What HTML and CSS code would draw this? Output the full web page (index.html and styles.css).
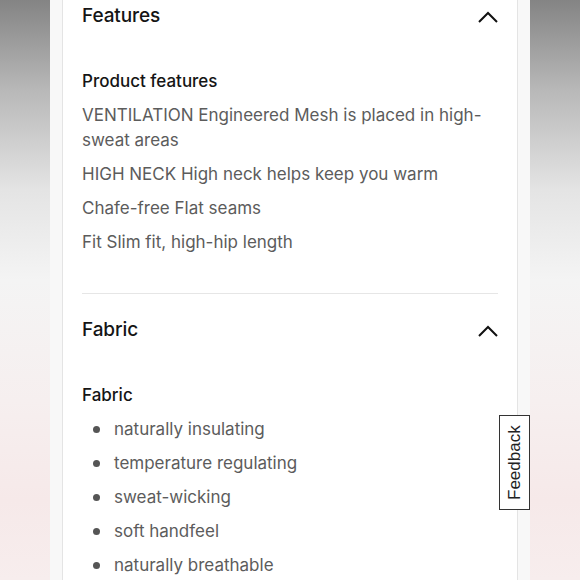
FILE: index.html
```html
<!DOCTYPE html>
<html>
<head>
<meta charset="utf-8">
<link rel="stylesheet" href="styles.css">
</head>
<body>
<div class="frame">
  <div class="card">
    <section class="section">
      <div class="section-head">
        <h2 class="section-title">Features</h2>
        <svg class="chevron" width="20" height="12" viewBox="0 0 20 12"><path d="M1 11 L10 2 L19 11" fill="none" stroke="#111" stroke-width="2"/></svg>
      </div>
      <h3 class="sub-title">Product features</h3>
      <ul class="plain-list">
        <li>VENTILATION Engineered Mesh is placed in high-sweat areas</li>
        <li>HIGH NECK High neck helps keep you warm</li>
        <li>Chafe-free Flat seams</li>
        <li>Fit Slim fit, high-hip length</li>
      </ul>
    </section>
    <section class="section section-bordered">
      <div class="section-head">
        <h2 class="section-title">Fabric</h2>
        <svg class="chevron" width="20" height="12" viewBox="0 0 20 12"><path d="M1 11 L10 2 L19 11" fill="none" stroke="#111" stroke-width="2"/></svg>
      </div>
      <h3 class="sub-title">Fabric</h3>
      <ul class="bullet-list">
        <li>naturally insulating</li>
        <li>temperature regulating</li>
        <li>sweat-wicking</li>
        <li>soft handfeel</li>
        <li>naturally breathable</li>
      </ul>
    </section>
  </div>
  <div class="feedback">Feedback</div>
</div>
</body>
</html>
```

FILE: styles.css
```css
html, body {
  margin: 0;
  padding: 0;
  height: 580px;
  overflow: hidden;
}
body {
  background: linear-gradient(to bottom, #848484 0px, #b8b8b8 90px, #e4e4e4 190px, #f4f4f4 280px, #f6efef 400px, #f6e9e9 500px, #f7eded 580px);
  font-family: "Inter", "Open Sans", sans-serif;
}
.frame {
  position: relative;
  width: 480px;
  height: 580px;
  margin: 0 auto;
  padding: 0 12px;
  box-sizing: border-box;
  background: #f8f8f8;
}
.card {
  height: 580px;
  background: #fff;
  border-left: 1px solid #e4e4e4;
  border-right: 1px solid #e4e4e4;
  padding: 0 19px 0 19px;
  overflow: hidden;
}
.section {
  padding-bottom: 38px;
}
.section-bordered {
  border-top: 1px solid #e6e6e6;
  padding-top: 20px;
}
.section-head {
  display: flex;
  align-items: center;
  justify-content: space-between;
  height: 30px;
}
.section-title {
  margin: 0;
  font-size: 19px;
  font-weight: 500;
  color: #151515;
  letter-spacing: -0.1px;
}
.chevron {
  margin-top: 3px;
  margin-right: 0px;
}
.sub-title {
  margin: 39px 0 0 0;
  font-size: 17px;
  line-height: 25px;
  font-weight: 500;
  color: #151515;
}
.plain-list, .bullet-list {
  list-style: none;
  margin: 0;
  padding: 0;
}
.plain-list li, .bullet-list li {
  margin-top: 9px;
  font-size: 17px;
  line-height: 25px;
  color: #5c5c5c;
}
.bullet-list li {
  display: flex;
  align-items: center;
  gap: 14px;
  padding-left: 11px;
}
.bullet-list li::before {
  content: "";
  width: 7px;
  height: 7px;
  border-radius: 50%;
  background: #555;
  flex: none;
}
.feedback {
  position: absolute;
  left: 449px;
  top: 415px;
  width: 31px;
  height: 95px;
  box-sizing: border-box;
  border: 1.5px solid #333;
  background: #fff;
  writing-mode: vertical-rl;
  transform: rotate(180deg);
  display: flex;
  align-items: center;
  justify-content: center;
  font-family: "Liberation Sans", Arial, sans-serif;
  font-size: 17px;
  color: #222;
}
```
